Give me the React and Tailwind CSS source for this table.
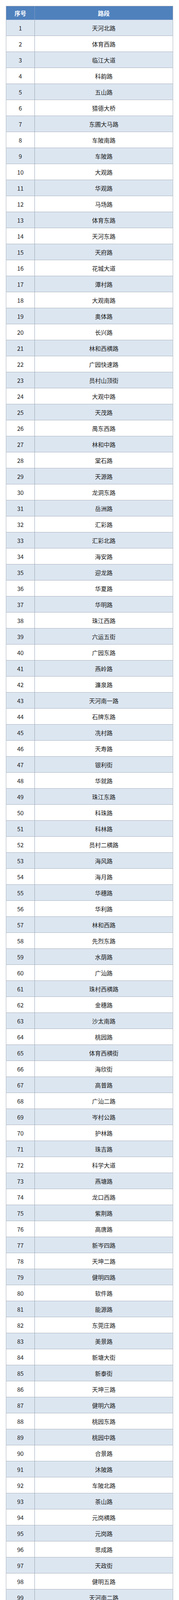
const roads = [
  '天河北路', '体育西路', '临江大道', '科韵路', '五山路', '猎德大桥', '东圃大马路', '车陂南路', '车陂路', '大观路',
  '华观路', '马场路', '体育东路', '天河东路', '天府路', '花城大道', '潭村路', '大观南路', '奥体路', '长兴路',
  '林和西横路', '广园快速路', '员村山顶街', '大观中路', '天茂路', '禺东西路', '林和中路', '棠石路', '天源路', '龙洞东路',
  '岳洲路', '汇彩路', '汇彩北路', '海安路', '迎龙路', '华夏路', '华明路', '珠江西路', '六运五街', '广园东路',
  '燕岭路', '濂泉路', '天河南一路', '石牌东路', '冼村路', '天寿路', '银利街', '华就路', '珠江东路', '科珠路',
  '科林路', '员村二横路', '海风路', '海月路', '华穗路', '华利路', '林和西路', '先烈东路', '水荫路', '广汕路',
  '珠村西横路', '金穗路', '沙太南路', '桃园路', '体育西横街', '海欣街', '高普路', '广汕二路', '岑村公路', '护林路',
  '珠吉路', '科学大道', '燕塘路', '龙口西路', '紫荆路', '高唐路', '新岑四路', '天坤二路', '健明四路', '软件路',
  '能源路', '东莞庄路', '美景路', '新塘大街', '新泰街', '天坤三路', '健明六路', '桃园东路', '桃园中路', '合景路',
  '沐陂路', '车陂北路', '茶山路', '元岗横路', '元岗路', '思成路', '天政街', '健明五路', '天河南二路', '东风西路德坭立交',
  '东风西路西场立交桥', '珠江隧道', '人民高架路', '人民桥', '康王南路', '鹤洞大桥', '龙溪大道龙溪立交桥桥面路段', '广佛大桥', '花地大道南西塱跨线桥', '沙尾桥路段（广州段）',
  '洲头咀隧道', '东风西路', '南岸路', '广园西路',
];

export default function App() {
  return (
    <div className="bg-white pt-[15px] pb-[15px] leading-none font-['Noto_Sans_CJK_SC','Noto_Sans',sans-serif]">
      <div className="ml-[15px] w-[427px] border border-[#a9b2bd]">
        {/* header */}
        <div className="flex h-[35px] bg-[#4f81bd] text-white font-bold text-[15px] border-b border-[#7f9cc4] overflow-hidden">
          <div className="w-[73px] flex items-center justify-center border-r border-[#7f9cc4]">序号</div>
          <div className="flex-1 flex items-center justify-center">路段</div>
        </div>

        {/* rows, striped */}
        {roads.map((name, i) => (
          <div
            key={i}
            className={
              i % 2 === 0
                ? 'flex h-[41px] bg-[#dce6f1] text-[15px] text-[#1a1a1a] border-b border-[#a7b1bd] last:border-b-0 last:h-[40px]'
                : 'flex h-[41px] bg-white text-[15px] text-[#1a1a1a] border-b border-[#a7b1bd] last:border-b-0 last:h-[40px]'
            }
          >
            <div className="w-[73px] flex items-center justify-center border-r border-[#9aa6b6]">{i + 1}</div>
            <div className="flex-1 flex items-center justify-center whitespace-nowrap">{name}</div>
          </div>
        ))}
      </div>
    </div>
  );
}
